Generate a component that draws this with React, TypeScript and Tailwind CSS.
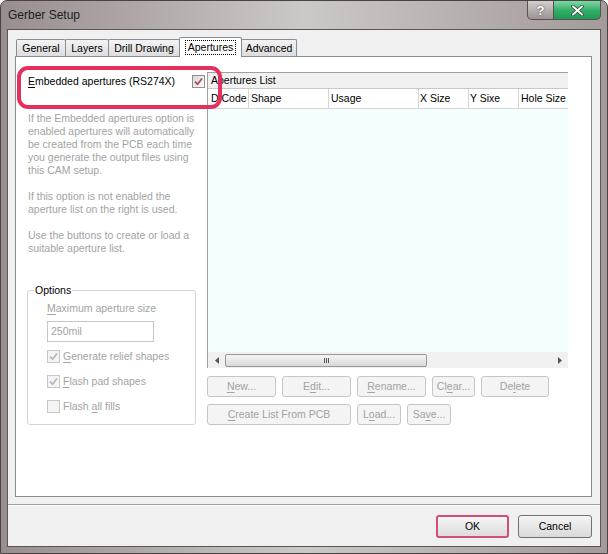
import type { ReactNode } from "react";

function Tick({ color }: { color: string }) {
	return (
		<svg width="9" height="9" viewBox="0 0 9 9">
			<path d="M1 4.6 L3.6 7.2 L8 1.4" fill="none" stroke={color} strokeWidth="1.7" />
		</svg>
	);
}

function CheckBox({ checked, enabled }: { checked: boolean; enabled?: boolean }) {
	return (
		<span
			className={`w-[13px] h-[13px] border flex items-center justify-center shrink-0 ${
				enabled
					? "border-[#8e8f8f] bg-linear-to-br from-[#d8d8d8] to-[#fbfbfb]"
					: "border-[#c8c8c8] bg-[#f4f4f4]"
			}`}
		>
			{checked && <Tick color={enabled ? "#a84c52" : "#b8b8b8"} />}
		</span>
	);
}

function Btn({ className, children }: { className: string; children: ReactNode }) {
	return (
		<div
			className={`h-[21px] border border-[#c6c6c6] rounded-[3px] bg-[#f4f4f4] flex items-center justify-center text-[#a2a2a2] ${className}`}
		>
			{children}
		</div>
	);
}

const U = ({ c }: { c: string }) => <span className="underline underline-offset-[2px]">{c}</span>;

const tabs = [
	{ label: "General", w: "w-[50px]" },
	{ label: "Layers", w: "w-[44px]" },
	{ label: "Drill Drawing", w: "w-[72px]" },
	{ label: "Apertures", w: "w-[63px]", active: true },
	{ label: "Advanced", w: "w-[56px]" },
];

const columns = [
	{ label: "D Code", cls: "w-[41px] pl-[3px]" },
	{ label: "Shape", cls: "w-[80px] pl-[2px]" },
	{ label: "Usage", cls: "w-[90px] pl-[2px]" },
	{ label: "X Size", cls: "w-[50px] pl-[1px]" },
	{ label: "Y Sixe", cls: "w-[50px] pl-[1px]" },
	{ label: "Hole Size", cls: "flex-1 pl-[2px]" },
];

export default function App() {
	return (
		<div className="w-[608px] h-[554px] font-['Liberation_Sans',Arial,sans-serif] text-[10.5px] leading-[13px] text-black select-none">
			<div className="w-full h-full flex flex-col rounded-t-[7px] border border-[#4b4343] bg-linear-to-r from-[#988e8e] via-[#cdc8c8] to-[#a39a9a] overflow-hidden">
				{/* title bar */}
				<div className="h-[28px] flex items-start shrink-0">
					<span className="pl-[7px] pt-[7px] text-[12px] leading-[14px] text-[#1e1e1e]">
						Gerber Setup
					</span>
					<div className="ml-auto mr-[6px] flex">
						<div className="w-[27px] h-[19px] border border-t-0 border-[#5a5050] rounded-bl-[5px] bg-linear-to-b from-[#d4cece] to-[#9c9494] flex items-center justify-center">
							<span className="text-[13px] font-bold leading-[13px] text-white [text-shadow:0_0_2px_#333]">?</span>
						</div>
						<div className="w-[47px] h-[19px] border border-t-0 border-l-0 border-[#5a5050] rounded-br-[5px] bg-linear-to-b from-[#7fd9a4] via-[#35b06b] to-[#1e9a55] flex items-center justify-center">
							<svg width="13" height="11" viewBox="0 0 13 11">
								<path d="M2 1.5 L11 9.5 M11 1.5 L2 9.5" stroke="#2a4a3a" strokeWidth="3.6" strokeLinecap="round" />
								<path d="M2 1.5 L11 9.5 M11 1.5 L2 9.5" stroke="#ffffff" strokeWidth="2" strokeLinecap="round" />
							</svg>
						</div>
					</div>
				</div>

				{/* client area */}
				<div className="flex-1 mx-[6px] mb-[6px] border border-[#5d5555] bg-[#f0f0f0] flex flex-col">
					<div className="ml-[7px] pt-[7px] w-[577px]">
						{/* tabs */}
						<div className="flex items-end h-[19px] pl-[1px]">
							{tabs.map((t) =>
								t.active ? (
									<div
										key={t.label}
										className={`${t.w} h-[20px] -mb-px -mr-px relative z-10 bg-white border border-b-0 border-[#898c95] rounded-t-[2px] flex items-center justify-center`}
									>
										<span className="border border-dotted border-black px-[2px] leading-[13px]">{t.label}</span>
									</div>
								) : (
									<div
										key={t.label}
										className={`${t.w} h-[17px] -mr-px border border-b-0 border-[#898c95] rounded-t-[2px] bg-linear-to-b from-[#f3f3f3] to-[#dddddd] flex items-center justify-center`}
									>
										{t.label}
									</div>
								),
							)}
						</div>

						{/* tab panel */}
						<div className="relative h-[441px] border border-[#898c95] bg-white flex">
							{/* left column */}
							<div className="w-[191px] pl-[12px] flex flex-col">
								<div className="mt-[17px] h-[14px] flex items-center pr-[2px]">
									<span className="leading-[14px]">
										<U c="E" />mbedded apertures (RS274X)
									</span>
									<span className="ml-auto">
										<CheckBox checked enabled />
									</span>
								</div>
								<div className="mt-[24px] text-[#a3a3a3] whitespace-nowrap">
									<p>
										If the Embedded apertures option is
										<br />
										enabled apertures will automatically
										<br />
										be created from the PCB each time
										<br />
										you generate the output files using
										<br />
										this CAM setup.
									</p>
									<p className="mt-[13px]">
										If this option is not enabled the
										<br />
										aperture list on the right is used.
									</p>
									<p className="mt-[13px]">
										Use the buttons to create or load a
										<br />
										suitable aperture list.
									</p>
								</div>
								<fieldset className="mt-[28px] -ml-[1px] w-[169px] h-[142px] border border-[#d5d5d5] rounded-[3px]">
									<legend className="ml-[6px] px-[1px] leading-[14px]">Options</legend>
									<div className="pl-[19px]">
										<div className="mt-[4px] leading-[14px] text-[#a3a3a3]">
											<U c="M" />aximum aperture size
										</div>
										<div className="mt-[6px] w-[107px] h-[21px] border border-[#c3c6cb] flex items-center pl-[3px] text-[#a3a3a3]">
											250mil
										</div>
										<div className="mt-[7px] h-[14px] flex items-center gap-[3px] text-[#a3a3a3]">
											<CheckBox checked />
											<span>
												<U c="G" />enerate relief shapes
											</span>
										</div>
										<div className="mt-[11px] h-[14px] flex items-center gap-[3px] text-[#a3a3a3]">
											<CheckBox checked />
											<span>
												<U c="F" />lash pad shapes
											</span>
										</div>
										<div className="mt-[11px] h-[14px] flex items-center gap-[3px] text-[#a3a3a3]">
											<CheckBox checked={false} />
											<span>
												Flash <U c="a" />ll fills
											</span>
										</div>
									</div>
								</fieldset>
							</div>

							{/* right: aperture list */}
							<div className="w-[361px] mt-[15px] flex flex-col">
								<div className="h-[296px] border-l border-t border-[#a0a0a0] flex flex-col">
									<div className="h-[16px] bg-[#f1f1f1] border-b border-[#c8c8c8] flex items-center pl-[3px]">
										Apertures List
									</div>
									<div className="h-[20px] bg-white border-b border-[#d5d5d5] flex">
										{columns.map((c, i) => (
											<div
												key={c.label}
												className={`${c.cls} h-full flex items-center whitespace-nowrap overflow-hidden ${
													i < columns.length - 1 ? "border-r border-[#d5d5d5]" : ""
												}`}
											>
												{c.label}
											</div>
										))}
									</div>
									<div className="flex-1 bg-[#f4fefe]" />
									<div className="h-[16px] bg-[#f0f0f0] flex items-center">
										<div className="w-[17px] flex justify-center">
											<svg width="4" height="7" viewBox="0 0 4 7">
												<polygon points="4,0 4,7 0,3.5" fill="#555" />
											</svg>
										</div>
										<div className="w-[202px] h-[13px] border border-[#979797] rounded-[2px] bg-linear-to-b from-[#f5f5f5] to-[#d9d9d9] flex items-center justify-center gap-[1px]">
											<span className="w-px h-[5px] bg-[#555]" />
											<span className="w-px h-[5px] bg-[#555]" />
											<span className="w-px h-[5px] bg-[#555]" />
										</div>
										<div className="ml-auto w-[17px] flex justify-center">
											<svg width="4" height="7" viewBox="0 0 4 7">
												<polygon points="0,0 0,7 4,3.5" fill="#555" />
											</svg>
										</div>
									</div>
								</div>
								<div className="mt-[8px] flex gap-[6px]">
									<Btn className="w-[69px]">
										<span>
											<U c="N" />ew...
										</span>
									</Btn>
									<Btn className="w-[69px]">
										<span>
											E<U c="d" />it...
										</span>
									</Btn>
									<Btn className="w-[69px]">
										<span>
											<U c="R" />ename...
										</span>
									</Btn>
									<Btn className="w-[43px]">
										<span>
											Cl<U c="e" />ar...
										</span>
									</Btn>
									<Btn className="w-[68px]">
										<span>
											De<U c="l" />ete
										</span>
									</Btn>
								</div>
								<div className="mt-[7px] flex gap-[6px]">
									<Btn className="w-[144px]">
										<span>
											<U c="C" />reate List From PCB
										</span>
									</Btn>
									<Btn className="w-[44px]">
										<span>
											L<U c="o" />ad...
										</span>
									</Btn>
									<Btn className="w-[44px]">
										<span>
											Sa<U c="v" />e...
										</span>
									</Btn>
								</div>
							</div>

							{/* annotation */}
							<div className="absolute left-[1px] top-[9px] w-[205px] h-[43px] border-[4px] border-[#e4305c] rounded-[11px] pointer-events-none z-20" />
						</div>
					</div>

					{/* bottom bar */}
					<div className="h-[7px] shrink-0" />
					<div className="h-px bg-[#a0a0a0] shrink-0" />
					<div className="h-px bg-white shrink-0" />
					<div className="flex-1 flex justify-end items-start pt-[9px] pr-[8px] gap-[9px]">
						<div className="w-[73px] h-[23px] border-2 border-[#cf4f78] rounded-[3px] bg-linear-to-b from-[#f6f6f6] to-[#dcdcdc] flex items-center justify-center">
							OK
						</div>
						<div className="w-[74px] h-[23px] border border-[#707070] rounded-[3px] bg-linear-to-b from-[#f4f4f4] to-[#dadada] flex items-center justify-center">
							Cancel
						</div>
					</div>
				</div>
			</div>
		</div>
	);
}
